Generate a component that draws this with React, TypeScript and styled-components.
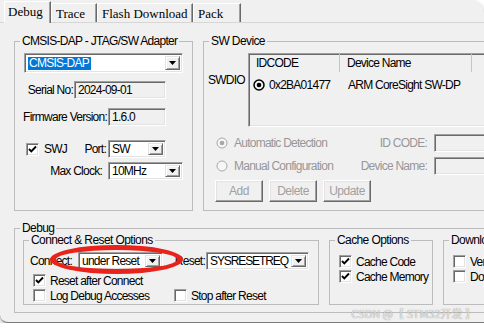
import React from 'react';
import styled, { createGlobalStyle } from 'styled-components';

const uiFont = `"Liberation Sans", Arial, sans-serif`;

const GlobalStyle = createGlobalStyle`
  html, body {
    margin: 0;
    padding: 0;
    background: #fff;
  }
  body {
    font-family: ${uiFont};
    font-size: 12px;
    letter-spacing: -0.75px;
    color: #000;
  }
  * {
    box-sizing: border-box;
  }
`;

const Window = styled.div`
  position: relative;
  width: 484px;
  height: 323px;
  overflow: hidden;
  background: #f0f0f0;
  border-bottom: 1px solid #7c7c7c;
  border-radius: 0 14px 0 8px;
  box-shadow: 0 2px 4px rgba(0, 0, 0, 0.3);
`;

const TabStrip = styled.div`
  display: flex;
  align-items: flex-end;
  height: 23px;
  padding-left: 4px;
  border-bottom: 1px solid #d6d6d6;
`;

const Tab = styled.div<{ $w: number; $active?: boolean }>`
  position: relative;
  z-index: ${({ $active }) => ($active ? 1 : 0)};
  flex: none;
  width: ${({ $w }) => $w}px;
  height: ${({ $active }) => ($active ? 22 : 19)}px;
  margin-bottom: ${({ $active }) => ($active ? -1 : 0)}px;
  padding: ${({ $active }) => ($active ? '2px 0 0 3px' : '2px 0 0 4px')};
  background: #f0f0f0;
  border-top: 1px solid #fff;
  border-left: 1px solid #fff;
  border-right: 1px solid #696969;
  box-shadow: inset -1px 0 #a0a0a0;
  font-family: "Liberation Serif", "DejaVu Serif", serif;
  font-size: 13px;
  letter-spacing: 0;
  line-height: 16px;
  white-space: nowrap;
`;

const Panel = styled.div`
  padding: 12px 0 0 14px;
`;

const TopRow = styled.div`
  display: flex;
  gap: 10px;
`;

const Group = styled.fieldset<{ $w: number; $h: number; $top?: number }>`
  flex: none;
  margin: ${({ $top }) => $top ?? 0}px 0 0 0;
  padding: 0;
  min-width: 0;
  width: ${({ $w }) => $w}px;
  height: ${({ $h }) => $h}px;
  border: 1px solid #bcbcbc;
`;

const Legend = styled.legend<{ $tight?: boolean }>`
  margin-left: 5px;
  padding: 0 2px;
  font-size: 12px;
  letter-spacing: ${({ $tight }) => ($tight ? -0.7 : -0.6)}px;
  line-height: 12px;
  white-space: nowrap;
`;

const FlexRow = styled.div<{ $indent?: number; $top?: number }>`
  display: flex;
  align-items: center;
  padding-left: ${({ $indent }) => $indent ?? 0}px;
  margin-top: ${({ $top }) => $top ?? 0}px;
  white-space: nowrap;
`;

const LabeledRow = styled.div<{ $label: number; $gap: number; $top: number }>`
  display: grid;
  grid-template-columns: ${({ $label }) => $label}px auto;
  column-gap: ${({ $gap }) => $gap}px;
  align-items: center;
  margin-top: ${({ $top }) => $top}px;
  white-space: nowrap;
`;

const Label = styled.span<{ $w?: number; $right?: boolean; $pad?: number }>`
  flex: none;
  width: ${({ $w }) => ($w ? `${$w}px` : 'auto')};
  padding-left: ${({ $pad }) => $pad ?? 0}px;
  text-align: ${({ $right }) => ($right ? 'right' : 'left')};
  justify-self: ${({ $right }) => ($right ? 'end' : 'start')};
  line-height: 14px;
  white-space: nowrap;
`;

const sunken = `
  border: 1px solid;
  border-color: #a0a0a0 #fff #fff #a0a0a0;
  box-shadow: inset 1px 1px #696969, inset -1px -1px #e3e3e3;
`;

const ComboBox = styled.div<{ $w: number; $h?: number; $ml?: number }>`
  flex: none;
  display: flex;
  align-items: center;
  width: ${({ $w }) => $w}px;
  height: ${({ $h }) => $h ?? 18}px;
  margin-left: ${({ $ml }) => $ml ?? 0}px;
  padding: 2px;
  background: #fff;
  ${sunken}
`;

const ComboText = styled.span<{ $tight?: boolean }>`
  flex: 1;
  padding-left: 1px;
  overflow: hidden;
  letter-spacing: ${({ $tight }) => ($tight ? -1.1 : -0.75)}px;
  line-height: 13px;
  white-space: nowrap;
`;

const Selected = styled.span`
  padding: 0 2px 0 1px;
  background: #0078d7;
  color: #fff;
`;

const DropButton = styled.span`
  flex: none;
  align-self: stretch;
  width: 15px;
  display: flex;
  align-items: center;
  justify-content: center;
  background: #f0f0f0;
  border: 1px solid;
  border-color: #e3e3e3 #696969 #696969 #e3e3e3;
  box-shadow: inset 1px 1px #fff, inset -1px -1px #a0a0a0;
`;

const TextBox = styled.div<{ $w: number }>`
  flex: none;
  width: ${({ $w }) => $w}px;
  height: 18px;
  padding: 0 3px;
  background: #f0f0f0;
  line-height: 16px;
  white-space: nowrap;
  ${sunken}
`;

const Box = styled.span`
  flex: none;
  width: 13px;
  height: 13px;
  display: flex;
  align-items: center;
  justify-content: center;
  background: #fff;
  ${sunken}
`;

const Icon = styled.svg`
  flex: none;
  display: block;
`;

const CheckRow = styled.div<{ $indent: number; $top: number }>`
  display: flex;
  align-items: center;
  height: 13px;
  padding-left: ${({ $indent }) => $indent}px;
  margin-top: ${({ $top }) => $top}px;
  white-space: nowrap;
`;

const CheckItem = styled.label<{ $w?: number }>`
  flex: none;
  display: flex;
  align-items: center;
  gap: 4px;
  width: ${({ $w }) => ($w ? `${$w}px` : 'auto')};
  line-height: 14px;
`;

const TableRow = styled.div`
  display: flex;
  margin-top: 6px;
`;

const SideLabel = styled.span`
  flex: none;
  width: 44px;
  padding: 20px 0 0 4px;
  line-height: 14px;
`;

const Table = styled.div`
  flex: none;
  width: 260px;
  height: 74px;
  ${sunken}
`;

const TableLine = styled.div<{ $head?: boolean }>`
  display: grid;
  grid-template-columns: 91px 132px 40px;
  height: ${({ $head }) => ($head ? 18 : 22)}px;
  align-items: center;
  line-height: 14px;
  white-space: nowrap;
`;

const HeadCell = styled.span`
  height: 100%;
  padding: 2px 0 0 7px;
  border-right: 1px solid #c6c6c6;
`;

const Cell = styled.span<{ $pad: number }>`
  display: flex;
  align-items: center;
  gap: 4px;
  padding-left: ${({ $pad }) => $pad}px;
  padding-top: 3px;
`;

const OptionsGrid = styled.div`
  display: grid;
  grid-template-columns: 134px 96px 80px;
  grid-template-rows: 18px 18px;
  row-gap: 5px;
  align-items: center;
  margin-top: 7px;
  white-space: nowrap;
`;

const RadioOption = styled.span`
  display: flex;
  align-items: center;
  gap: 6px;
  padding-left: 12px;
  color: #979797;
  line-height: 14px;
`;

const FieldLabel = styled.span`
  justify-self: end;
  padding-right: 7px;
  color: #979797;
  line-height: 14px;
`;

const ButtonRow = styled.div`
  display: flex;
  gap: 6px;
  padding-left: 11px;
  margin-top: 5px;
`;

const Button = styled.button`
  width: 48px;
  height: 22px;
  padding: 0;
  background: #f0f0f0;
  border: 1px solid;
  border-color: #fff #696969 #696969 #fff;
  box-shadow: inset -1px -1px #a0a0a0, inset 1px 1px #e3e3e3;
  font-family: ${uiFont};
  font-size: 12px;
  letter-spacing: -0.5px;
  color: #a0a0a0;
`;

const InnerRow = styled.div`
  display: flex;
  gap: 10px;
  padding-left: 8px;
`;

const Highlight = styled.div`
  position: absolute;
  left: 50px;
  top: 245px;
  width: 133px;
  height: 29px;
  border: 5px solid #e8231c;
  border-left-width: 6px;
  border-right-width: 6px;
  border-radius: 50%;
  pointer-events: none;
`;

const Watermark = styled.div`
  position: absolute;
  right: 8px;
  bottom: 3px;
  font-family: "Noto Sans CJK SC", "Liberation Sans", sans-serif;
  font-size: 11px;
  letter-spacing: 0;
  line-height: 12px;
  color: #e4e4e4;
  text-shadow: 0 0 1px rgba(0, 0, 0, 0.45);
  white-space: nowrap;
`;

const Arrow = () => (
  <Icon width="7" height="4" viewBox="0 0 7 4">
    <polygon points="0,0 7,0 3.5,4" fill="#000" />
  </Icon>
);

const Check = () => (
  <Icon width="9" height="9" viewBox="0 0 9 9">
    <polyline points="1,4 3.3,6.4 8,1.5" fill="none" stroke="#000" strokeWidth="1.9" />
  </Icon>
);

function Combo({
  w,
  h,
  ml,
  tight,
  children,
}: {
  w: number;
  h?: number;
  ml?: number;
  tight?: boolean;
  children: React.ReactNode;
}) {
  return (
    <ComboBox $w={w} $h={h} $ml={ml}>
      <ComboText $tight={tight}>{children}</ComboText>
      <DropButton>
        <Arrow />
      </DropButton>
    </ComboBox>
  );
}

function CheckBox({ on }: { on?: boolean }) {
  return <Box>{on && <Check />}</Box>;
}

function Radio({ on, dim }: { on?: boolean; dim?: boolean }) {
  const c = dim ? '#a8a8a8' : '#000';
  return (
    <Icon width="12" height="12" viewBox="0 0 12 12">
      <circle cx="6" cy="6" r="5" fill={dim ? '#f6f6f6' : 'none'} stroke={c} strokeWidth={dim ? 1 : 1.5} />
      {on && <circle cx="6" cy="6" r="2.3" fill={c} />}
    </Icon>
  );
}

export default function App() {
  return (
    <>
      <GlobalStyle />
      <Window>
        <TabStrip>
          <Tab $w={47} $active>Debug</Tab>
          <Tab $w={46}>Trace</Tab>
          <Tab $w={96}>Flash Download</Tab>
          <Tab $w={48}>Pack</Tab>
        </TabStrip>

        <Panel>
          <TopRow>
            <Group $w={179} $h={176}>
              <Legend $tight>CMSIS-DAP - JTAG/SW Adapter</Legend>
              <FlexRow $indent={9} $top={6}>
                <Combo w={159} h={20}>
                  <Selected>CMSIS-DAP</Selected>
                </Combo>
              </FlexRow>
              <LabeledRow $label={58} $gap={1} $top={8}>
                <Label $right>Serial No:</Label>
                <TextBox $w={92}>2024-09-01</TextBox>
              </LabeledRow>
              <LabeledRow $label={92} $gap={1} $top={9}>
                <Label $right>Firmware Version:</Label>
                <TextBox $w={58}>1.6.0</TextBox>
              </LabeledRow>
              <FlexRow $indent={11} $top={14}>
                <CheckBox on />
                <Label $w={42} $pad={5}>SWJ</Label>
                <Label $w={25} $right>Port:</Label>
                <Combo w={58} ml={2}>SW</Combo>
              </FlexRow>
              <LabeledRow $label={87} $gap={6} $top={4}>
                <Label $right>Max Clock:</Label>
                <Combo w={75}>10MHz</Combo>
              </LabeledRow>
            </Group>

            <Group $w={300} $h={176}>
              <Legend>SW Device</Legend>
              <TableRow>
                <SideLabel>SWDIO</SideLabel>
                <Table>
                  <TableLine $head>
                    <HeadCell>IDCODE</HeadCell>
                    <HeadCell>Device Name</HeadCell>
                    <HeadCell />
                  </TableLine>
                  <TableLine>
                    <Cell $pad={4}>
                      <Radio on />
                      0x2BA01477
                    </Cell>
                    <Cell $pad={8}>ARM CoreSight SW-DP</Cell>
                  </TableLine>
                </Table>
              </TableRow>
              <OptionsGrid>
                <RadioOption>
                  <Radio on dim />
                  Automatic Detection
                </RadioOption>
                <FieldLabel>ID CODE:</FieldLabel>
                <TextBox $w={80} />
                <RadioOption>
                  <Radio dim />
                  Manual Configuration
                </RadioOption>
                <FieldLabel>Device Name:</FieldLabel>
                <TextBox $w={80} />
              </OptionsGrid>
              <ButtonRow>
                <Button disabled>Add</Button>
                <Button disabled>Delete</Button>
                <Button disabled>Update</Button>
              </ButtonRow>
            </Group>
          </TopRow>

          <Group $w={490} $h={91} $top={11}>
            <Legend>Debug</Legend>
            <InnerRow>
              <Group $w={296} $h={71}>
                <Legend>Connect &amp; Reset Options</Legend>
                <FlexRow $indent={6} $top={6}>
                  <Label $w={48}>Connect:</Label>
                  <Combo w={85}>under Reset</Combo>
                  <Label $w={42} $right>Reset:</Label>
                  <Combo w={103} ml={1} tight>
                    SYSRESETREQ
                  </Combo>
                </FlexRow>
                <CheckRow $indent={9} $top={4}>
                  <CheckItem>
                    <CheckBox on />
                    Reset after Connect
                  </CheckItem>
                </CheckRow>
                <CheckRow $indent={9} $top={2}>
                  <CheckItem $w={141}>
                    <CheckBox />
                    Log Debug Accesses
                  </CheckItem>
                  <CheckItem>
                    <CheckBox />
                    Stop after Reset
                  </CheckItem>
                </CheckRow>
              </Group>

              <Group $w={104} $h={71}>
                <Legend>Cache Options</Legend>
                <CheckRow $indent={9} $top={9}>
                  <CheckItem>
                    <CheckBox on />
                    Cache Code
                  </CheckItem>
                </CheckRow>
                <CheckRow $indent={9} $top={2}>
                  <CheckItem>
                    <CheckBox on />
                    Cache Memory
                  </CheckItem>
                </CheckRow>
              </Group>

              <Group $w={150} $h={71}>
                <Legend>Download Options</Legend>
                <CheckRow $indent={9} $top={9}>
                  <CheckItem>
                    <CheckBox />
                    Verify Code Download
                  </CheckItem>
                </CheckRow>
                <CheckRow $indent={9} $top={2}>
                  <CheckItem>
                    <CheckBox />
                    Download to Flash
                  </CheckItem>
                </CheckRow>
              </Group>
            </InnerRow>
          </Group>
        </Panel>

        <Highlight />
        <Watermark>CSDN @【 STM32开发 】</Watermark>
      </Window>
    </>
  );
}
